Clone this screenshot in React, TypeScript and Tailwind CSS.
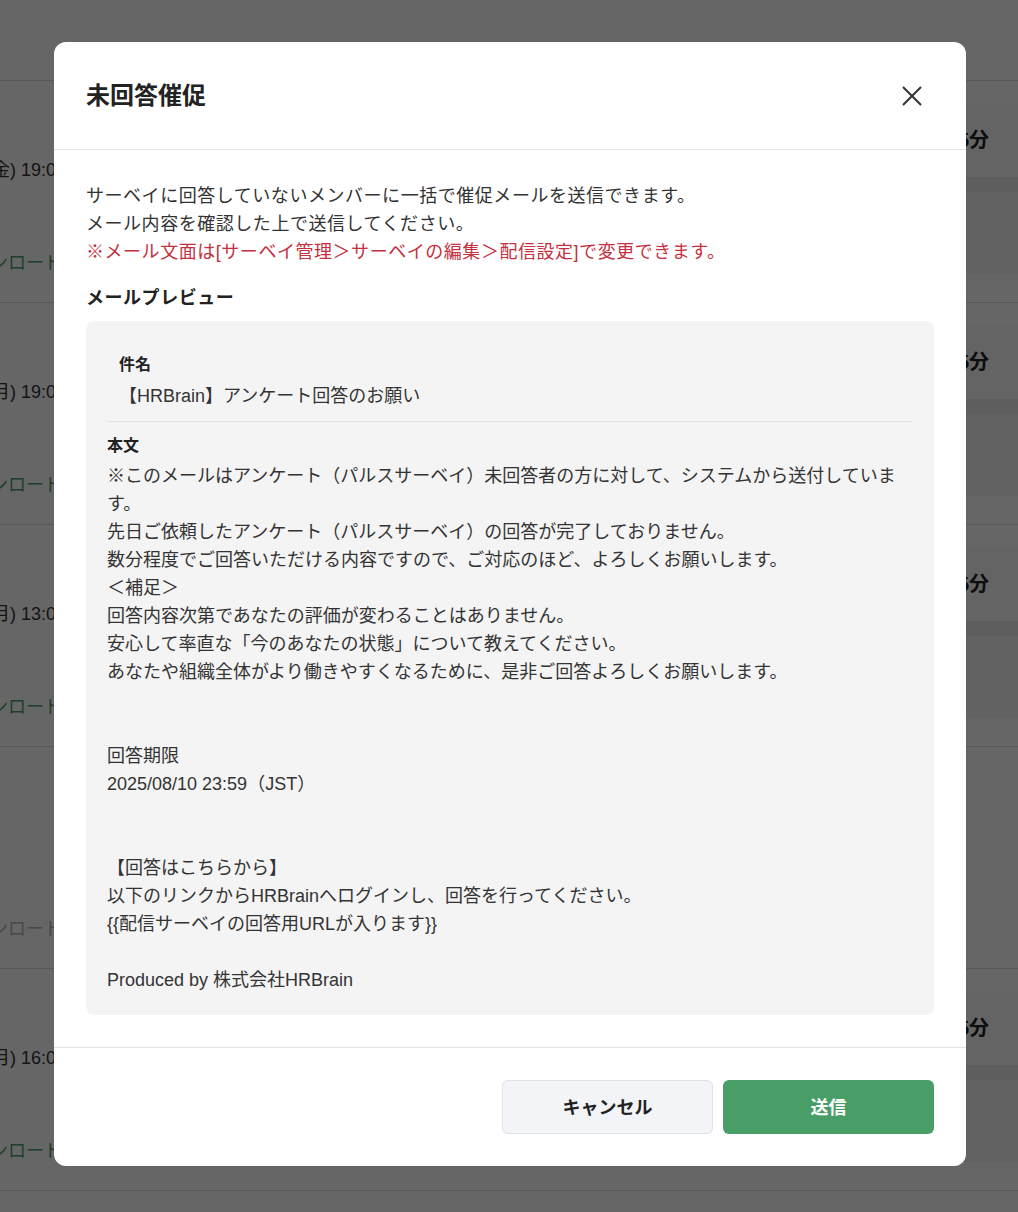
import { Fragment } from 'react'

const bgRows = [
  { date: '金) 19:00', link: 'ンロード', minutes: true, muted: false },
  { date: '月) 19:00', link: 'ンロード', minutes: true, muted: false },
  { date: '月) 13:00', link: 'ンロード', minutes: true, muted: false },
  { date: '', link: 'ンロード', minutes: false, muted: true },
  { date: '月) 16:00', link: 'ンロード', minutes: true, muted: false },
]

const bodyLines = [
  '※このメールはアンケート（パルスサーベイ）未回答者の方に対して、システムから送付しています。',
  '先日ご依頼したアンケート（パルスサーベイ）の回答が完了しておりません。',
  '数分程度でご回答いただける内容ですので、ご対応のほど、よろしくお願いします。',
  '＜補足＞',
  '回答内容次第であなたの評価が変わることはありません。',
  '安心して率直な「今のあなたの状態」について教えてください。',
  'あなたや組織全体がより働きやすくなるために、是非ご回答よろしくお願いします。',
  '',
  '',
  '回答期限',
  '2025/08/10 23:59（JST）',
  '',
  '',
  '【回答はこちらから】',
  '以下のリンクからHRBrainへログインし、回答を行ってください。',
  '{{配信サーベイの回答用URLが入ります}}',
  '',
  'Produced by 株式会社HRBrain',
]

function BackgroundPage() {
  return (
    <div className="h-[1212px] overflow-hidden bg-white">
      <div className="h-[81px] border-b border-[#dcdcdc]" />
      {bgRows.map((row, i) => (
        <div key={i} className="flex h-[222px] justify-between border-b border-[#dcdcdc]">
          <div className="flex flex-col -ml-[8px]">
            <div className="mt-[75px] h-[28px] text-[18px] leading-[28px] text-[#333]">
              {row.date}
            </div>
            <div
              className={`-ml-[2px] mt-[65px] h-[28px] text-[18px] leading-[28px] ${
                row.muted ? 'text-[#b5b5b5]' : 'text-[#479e67]'
              }`}
            >
              {row.link}
            </div>
          </div>
          {row.minutes && (
            <div className="flex w-[60px] flex-col pt-[22px]">
              <div className="flex h-[74px] items-center bg-[#f9f9f9] text-[20px] font-bold text-[#222]">
                5分
              </div>
              <div className="h-[15px] bg-[#ebebeb]" />
              <div className="h-[82px] bg-[#f6f6f6]" />
            </div>
          )}
        </div>
      ))}
    </div>
  )
}

export default function App() {
  return (
    <div className="relative h-[1212px] w-[1018px] overflow-hidden [font-family:'Liberation_Sans','Noto_Sans_CJK_JP',sans-serif]">
      <BackgroundPage />

      {/* Modal overlay */}
      <div className="absolute inset-0 flex bg-black/60">
        <div className="ml-[54px] mt-[42px] flex h-[1124px] w-[912px] flex-col rounded-xl bg-white">
          {/* Header */}
          <div className="flex h-[108px] shrink-0 items-center justify-between border-b border-[#e3e3e3] pl-8 pr-[44px]">
            <h2 className="text-[24px] font-bold text-[#222]">未回答催促</h2>
            <button className="text-[#333]">
              <svg width="20" height="20" viewBox="0 0 20 20" fill="none">
                <path d="M1 1L19 19M19 1L1 19" stroke="currentColor" strokeWidth="2" />
              </svg>
            </button>
          </div>

          {/* Body */}
          <div className="flex-1 px-8 pt-8 pb-8">
            <p className="text-[18px] leading-[28px] tracking-[0.03em] text-[#333]">
              サーベイに回答していないメンバーに一括で催促メールを送信できます。
              <br />
              メール内容を確認した上で送信してください。
            </p>
            <p className="text-[18px] leading-[28px] tracking-[0.03em] text-[#c5303f]">
              ※メール文面は[サーベイ管理＞サーベイの編集＞配信設定]で変更できます。
            </p>

            <h3 className="mt-[18px] text-[18px] font-bold leading-[28px] tracking-[0.03em] text-[#222]">
              メールプレビュー
            </h3>

            <div className="mt-[9px] rounded-lg bg-[#f4f4f4] pb-[21px] pl-[21px] pr-[22px] pt-[30px]">
              <div className="px-3 pb-[11px]">
                <div className="text-[16px] font-bold leading-[28px] text-[#222]">件名</div>
                <div className="mt-[3px] text-[18px] leading-[28px] text-[#333]">
                  【HRBrain】アンケート回答のお願い
                </div>
              </div>
              <div className="h-px bg-[#e2e2e2]" />
              <div className="mt-[10px] text-[16px] font-bold leading-[28px] text-[#222]">本文</div>
              <div className="mt-[2px] text-[18px] leading-[28px] text-[#333]">
                {bodyLines.map((line, i) => (
                  <Fragment key={i}>
                    {line === '' ? <div className="h-[28px]" /> : <div>{line}</div>}
                  </Fragment>
                ))}
              </div>
            </div>
          </div>

          {/* Footer */}
          <div className="flex shrink-0 justify-end gap-[10px] border-t border-[#e3e3e3] px-8 py-8">
            <button className="h-[54px] w-[211px] rounded-md border border-[#e0e2e6] bg-[#f3f4f8] pt-[3px] text-[18px] font-bold text-[#222]">
              キャンセル
            </button>
            <button className="h-[54px] w-[211px] rounded-md bg-[#489e66] pt-[3px] text-[18px] font-bold text-white">
              送信
            </button>
          </div>
        </div>
      </div>
    </div>
  )
}
